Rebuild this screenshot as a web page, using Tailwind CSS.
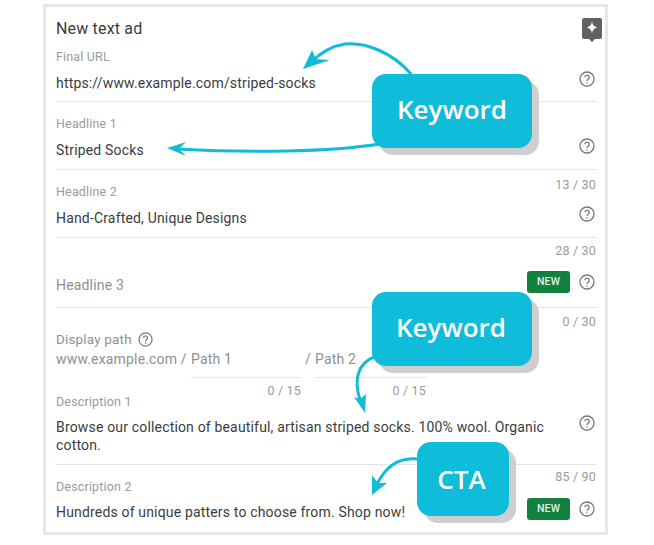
<!DOCTYPE html>
<html lang="en">
<head>
    <meta charset="UTF-8">
    <meta name="viewport" content="width=device-width, initial-scale=1.0">
    <title>New text ad</title>
    <script src="https://cdn.jsdelivr.net/npm/@tailwindcss/browser@4"></script>
</head>
<body class="bg-white">
<div class="relative w-[654px] h-[545px] overflow-hidden pt-[4px] pl-[43px] font-['Roboto',sans-serif] text-[14px] tracking-[0.17px] text-[#3a3d40]">

    <!-- Ad form -->
    <div class="w-[565px] h-[531px] border-[3px] border-[#e6e7ea] pl-[10px] pr-[9px]">

        <div class="flex justify-between h-[36px]">
            <div class="text-[16px] leading-[20px] mt-[12px]">New text ad</div>
            <svg class="mt-[11px] mr-[-6px]" width="20" height="24" viewBox="0 0 20 24">
                <path d="M2 0h16a2 2 0 0 1 2 2v17a2 2 0 0 1-2 2h-5l-3 3-3-3H2a2 2 0 0 1-2-2V2a2 2 0 0 1 2-2z" fill="#5f6163"/>
                <path d="M10 3.500c.6 3.600 2 5.200 6 6-4 .8-5.400 2.400-6 6-.6-3.600-2-5.200-6-6 4-.8 5.400-2.400 6-6z" fill="#fff"/>
            </svg>
        </div>

        <!-- Final URL -->
        <div class="h-[59px] border-b border-[#e3e4e6] flex justify-between">
            <div>
                <div class="text-[12.5px] leading-[16px] text-[#9a9b9d] mt-[6px]">Final URL</div>
                <div class="leading-[20px] mt-[8px]">https://www.example.com/striped-socks</div>
            </div>
            <svg class="mt-[28px] mr-[1px]" width="16" height="16" viewBox="0 0 16 16" fill="none" stroke="#77797b" stroke-width="1.300">
                <circle cx="8" cy="8" r="7"/><path d="M5.800 6.300a2.200 2.200 0 1 1 3.400 1.900c-.8.500-1.200.9-1.200 1.900"/><path d="M8 11.200v1.300"/>
            </svg>
        </div>

        <!-- Headline 1 -->
        <div class="h-[68px] border-b border-[#e3e4e6] flex justify-between">
            <div>
                <div class="text-[12.5px] leading-[16px] text-[#9a9b9d] mt-[14px]">Headline 1</div>
                <div class="leading-[20px] mt-[8px]">Striped Socks</div>
            </div>
            <svg class="mt-[36px] mr-[1px]" width="16" height="16" viewBox="0 0 16 16" fill="none" stroke="#77797b" stroke-width="1.300">
                <circle cx="8" cy="8" r="7"/><path d="M5.800 6.300a2.200 2.200 0 1 1 3.400 1.900c-.8.500-1.200.9-1.200 1.900"/><path d="M8 11.200v1.300"/>
            </svg>
        </div>

        <!-- Headline 2 -->
        <div class="h-[68px] border-b border-[#e3e4e6] flex justify-between">
            <div>
                <div class="text-[12.5px] leading-[16px] text-[#9a9b9d] mt-[14px]">Headline 2</div>
                <div class="leading-[20px] mt-[8px]">Hand-Crafted, Unique Designs</div>
            </div>
            <div class="flex flex-col items-end">
                <div class="text-[12.5px] leading-[16px] text-[#9a9b9d] mt-[7px]">13 / 30</div>
                <svg class="mt-[13px] mr-[1px]" width="16" height="16" viewBox="0 0 16 16" fill="none" stroke="#77797b" stroke-width="1.300">
                    <circle cx="8" cy="8" r="7"/><path d="M5.800 6.300a2.200 2.200 0 1 1 3.400 1.900c-.8.500-1.200.9-1.200 1.900"/><path d="M8 11.200v1.300"/>
                </svg>
            </div>
        </div>

        <!-- Headline 3 -->
        <div class="h-[70px] border-b border-[#e3e4e6] flex justify-between">
            <div class="text-[14px] leading-[20px] text-[#8f9092] mt-[37px]">Headline 3</div>
            <div class="flex flex-col items-end">
                <div class="text-[12.5px] leading-[16px] text-[#9a9b9d] mt-[5px]">28 / 30</div>
                <div class="flex items-center gap-[9px] mt-[12px] mr-[1px]">
                    <span class="w-[43px] h-[22px] rounded-[3px] bg-[#12803f] text-[#e4f2e9] text-[10.5px] font-medium flex items-center justify-center">NEW</span>
                    <svg width="16" height="16" viewBox="0 0 16 16" fill="none" stroke="#77797b" stroke-width="1.300">
                        <circle cx="8" cy="8" r="7"/><path d="M5.800 6.300a2.200 2.200 0 1 1 3.400 1.900c-.8.500-1.200.9-1.200 1.900"/><path d="M8 11.200v1.300"/>
                    </svg>
                </div>
            </div>
        </div>

        <!-- Display path + Description 1 -->
        <div class="h-[157px] border-b border-[#e3e4e6]">
            <div class="flex justify-between h-[23px]">
                <div class="flex items-center gap-[6px] mt-[23px] h-[16px]">
                    <span class="text-[13.5px] leading-[16px] text-[#8f9092]">Display path</span>
                    <svg width="15" height="15" viewBox="0 0 16 16" fill="none" stroke="#77797b" stroke-width="1.300">
                        <circle cx="8" cy="8" r="7"/><path d="M5.800 6.300a2.200 2.200 0 1 1 3.400 1.900c-.8.500-1.200.9-1.200 1.900"/><path d="M8 11.200v1.300"/>
                    </svg>
                </div>
                <div class="text-[12.5px] leading-[16px] text-[#9a9b9d] mt-[6px]">0 / 30</div>
            </div>
            <div class="flex mt-[19px] text-[14px] leading-[18px] text-[#8f9092]">
                <span class="w-[135px]">www.example.com /</span>
                <div class="w-[110px]">
                    <div class="h-[28px] border-b border-[#e3e4e6]">Path 1</div>
                    <div class="text-right text-[12.5px] leading-[16px] text-[#9a9b9d] mt-[5px]">0 / 15</div>
                </div>
                <span class="w-[10px] ml-[4px]">/</span>
                <div class="w-[111px]">
                    <div class="h-[28px] border-b border-[#e3e4e6]">Path 2</div>
                    <div class="text-right text-[12.5px] leading-[16px] text-[#9a9b9d] mt-[5px]">0 / 15</div>
                </div>
            </div>
            <div class="text-[12.5px] leading-[16px] text-[#9a9b9d] mt-[-5px]">Description 1</div>
            <div class="flex justify-between mt-[8px]">
                <div class="w-[500px] leading-[18px]">Browse our collection of beautiful, artisan striped socks. 100% wool. Organic cotton.</div>
                <svg class="mt-[-3px] mr-[1px]" width="16" height="16" viewBox="0 0 16 16" fill="none" stroke="#77797b" stroke-width="1.300">
                    <circle cx="8" cy="8" r="7"/><path d="M5.800 6.300a2.200 2.200 0 1 1 3.400 1.900c-.8.500-1.200.9-1.200 1.900"/><path d="M8 11.200v1.300"/>
                </svg>
            </div>
        </div>

        <!-- Description 2 -->
        <div class="flex justify-between">
            <div>
                <div class="text-[12.5px] leading-[16px] text-[#9a9b9d] mt-[14px]">Description 2</div>
                <div class="leading-[20px] mt-[7px]">Hundreds of unique patters to choose from. Shop now!</div>
            </div>
            <div class="flex flex-col items-end">
                <div class="text-[12.5px] leading-[16px] text-[#9a9b9d] mt-[4px]">85 / 90</div>
                <div class="flex items-center gap-[9px] mt-[13px] mr-[1px]">
                    <span class="w-[43px] h-[22px] rounded-[3px] bg-[#12803f] text-[#e4f2e9] text-[10.5px] font-medium flex items-center justify-center">NEW</span>
                    <svg width="16" height="16" viewBox="0 0 16 16" fill="none" stroke="#77797b" stroke-width="1.300">
                        <circle cx="8" cy="8" r="7"/><path d="M5.800 6.300a2.200 2.200 0 1 1 3.400 1.900c-.8.500-1.200.9-1.200 1.900"/><path d="M8 11.200v1.300"/>
                    </svg>
                </div>
            </div>
        </div>
    </div>

    <!-- Annotation arrows -->
    <svg class="absolute left-0 top-0" width="654" height="545" viewBox="0 0 654 545" fill="none" stroke="#12bcd9" stroke-width="3" stroke-linecap="round">
        <path d="M411 74C392 52 365 42 345 44C331 46 320 53 310 63"/>
        <path d="M303 69L312 50L316 59L330 60Z" fill="#12bcd9" stroke="none"/>
        <path d="M380 144C330 152 250 153 176 149"/>
        <path d="M167 148L186 142L179 149L186 156Z" fill="#12bcd9" stroke="none"/>
        <path d="M374 357C359 363 353 378 360 400"/>
        <path d="M365 413L354 397L360 399L366 394Z" fill="#12bcd9" stroke="none"/>
        <path d="M418 459C402 457 387 464 377 484"/>
        <path d="M372 495L372 475L378 483L387 483Z" fill="#12bcd9" stroke="none"/>
    </svg>

    <!-- Callouts -->
    <div class="absolute left-[372px] top-[74px] w-[160px] h-[74px] pb-[4px] rounded-[14px] bg-[#0fbcd9] shadow-[7px_7px_0_#cfcfcf] text-white font-['Open_Sans',sans-serif] font-semibold text-[26px] tracking-normal flex items-center justify-center">Keyword</div>
    <div class="absolute left-[372px] top-[292px] w-[160px] h-[74px] pb-[4px] pr-[2px] rounded-[14px] bg-[#0fbcd9] shadow-[7px_7px_0_#cfcfcf] text-white font-['Open_Sans',sans-serif] font-semibold text-[26px] tracking-normal flex items-center justify-center">Keyword</div>
    <div class="absolute left-[417px] top-[442px] w-[92px] h-[74px] pr-[3px] rounded-[14px] bg-[#0fbcd9] shadow-[7px_7px_0_#cfcfcf] text-white font-['Open_Sans',sans-serif] font-semibold text-[26px] tracking-normal flex items-center justify-center">CTA</div>
</div>
</body>
</html>
